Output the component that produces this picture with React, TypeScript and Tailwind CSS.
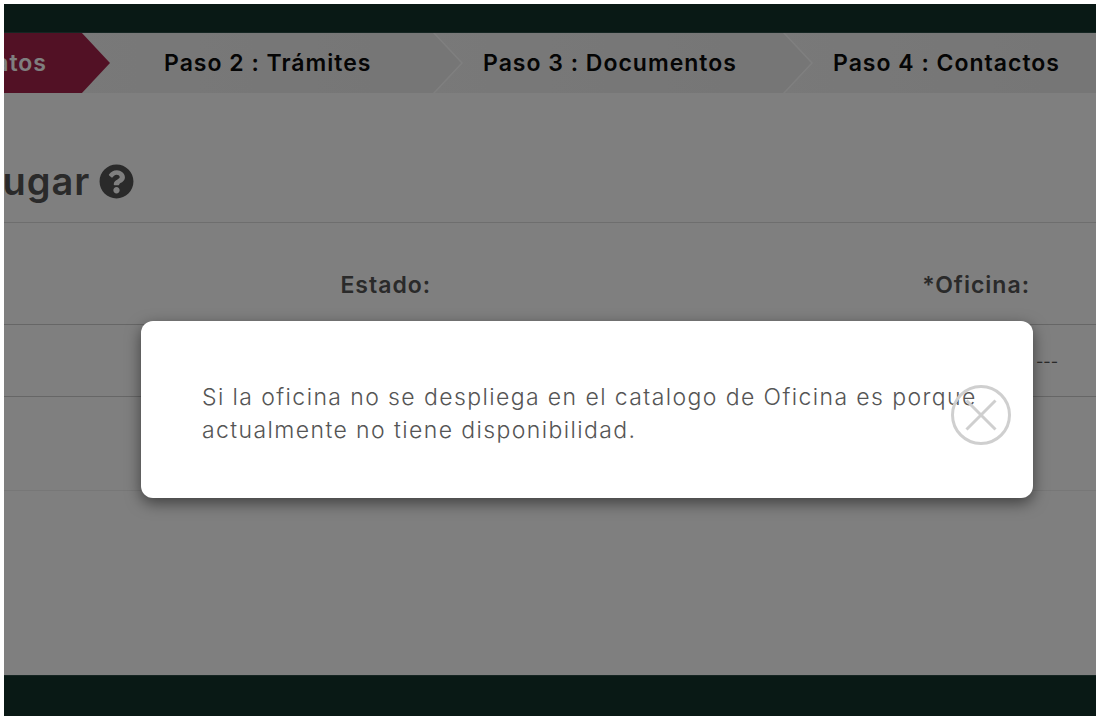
import { FaQuestionCircle } from "react-icons/fa";

const Tip = ({ fill, stroke }: { fill: string; stroke?: string }) => (
  <svg className="absolute top-0 left-full z-10 h-[60px] w-[30px]" viewBox="0 0 30 60">
    <path d="M0 -1 L29 30 L0 61" fill={fill} stroke={stroke ?? "none"} strokeWidth="1.5" />
  </svg>
);

const Step = ({ label, className }: { label: string; className: string }) => (
  <div className={`relative flex h-full shrink-0 items-center bg-gradient-to-r from-[#f2f2f2] to-[#ececec] whitespace-nowrap ${className}`}>
    <span>{label}</span>
    <Tip fill="#ececec" stroke="#ffffff" />
  </div>
);

export default function App() {
  return (
    <div className="h-screen bg-white p-1 font-['Inter',sans-serif]">
      <div className="relative flex h-full flex-col overflow-hidden bg-white">
        <div className="h-[29px] shrink-0 border-b border-[#2a4a44] bg-[#13322b]" />

        <nav className="flex h-[60px] shrink-0 text-[23px] font-semibold tracking-[1px] text-[#0a0a0a]">
          <div className="relative h-full w-[77px] shrink-0 bg-[#a5234a]">
            <div className="flex h-full items-center justify-end overflow-hidden pr-[34px] whitespace-nowrap text-white">
              <span>Paso 1 : Datos</span>
            </div>
            <Tip fill="#a5234a" />
          </div>
          <Step label="Paso 2 : Trámites" className="w-[352px] pl-[83px]" />
          <Step label="Paso 3 : Documentos" className="w-[350px] pl-[50px]" />
          <div className="flex h-full flex-1 items-center bg-gradient-to-r from-[#f2f2f2] to-[#ececec] pl-[50px] whitespace-nowrap">
            Paso 4 : Contactos
          </div>
        </nav>

        <main className="flex-1 text-[#555]">
          <div className="flex h-[130px] items-end border-b border-[#ddd] pb-[21px]">
            <h2 className="-ml-[24px] flex items-center gap-[9px] text-[38px] leading-[40px] font-semibold tracking-[1px]">
              Lugar
              <FaQuestionCircle className="text-[35px] text-[#555]" />
            </h2>
          </div>
          <div className="flex h-[102px] items-center justify-end gap-[491px] border-b border-[#ccc] pt-[24px] pr-[66px] text-[23px] font-semibold tracking-[1px]">
            <span>Estado:</span>
            <span>*Oficina:</span>
          </div>
          <div className="flex h-[72px] items-center justify-end border-b border-[#ccc] pr-[38px] text-base">
            ---
          </div>
          <div className="h-[94px] border-b border-[#eee]" />
        </main>

        <footer className="h-[41px] shrink-0 border-t border-[#2a4a44] bg-[#13322b]" />

        <div className="absolute inset-0 z-20 bg-black/50" />

        <div className="absolute top-[317px] left-[137px] z-30 flex h-[177px] w-[892px] items-center rounded-[12px] bg-white pt-[8px] pl-[61px] shadow-[0_5px_15px_rgba(0,0,0,0.5)]">
          <p className="w-[790px] text-[23px] leading-[33px] font-light tracking-[1.4px] text-[#555]">
            Si la oficina no se despliega en el catalogo de Oficina es porque actualmente no tiene disponibilidad.
          </p>
          <svg className="absolute top-[64px] right-[22px] h-[60px] w-[60px]" viewBox="0 0 60 60" fill="none" stroke="#cfcfcf" strokeWidth="3">
            <circle cx="30" cy="30" r="28.5" />
            <path d="M15.5 15.5 L44.5 44.5 M44.5 15.5 L15.5 44.5" />
          </svg>
        </div>
      </div>
    </div>
  );
}
